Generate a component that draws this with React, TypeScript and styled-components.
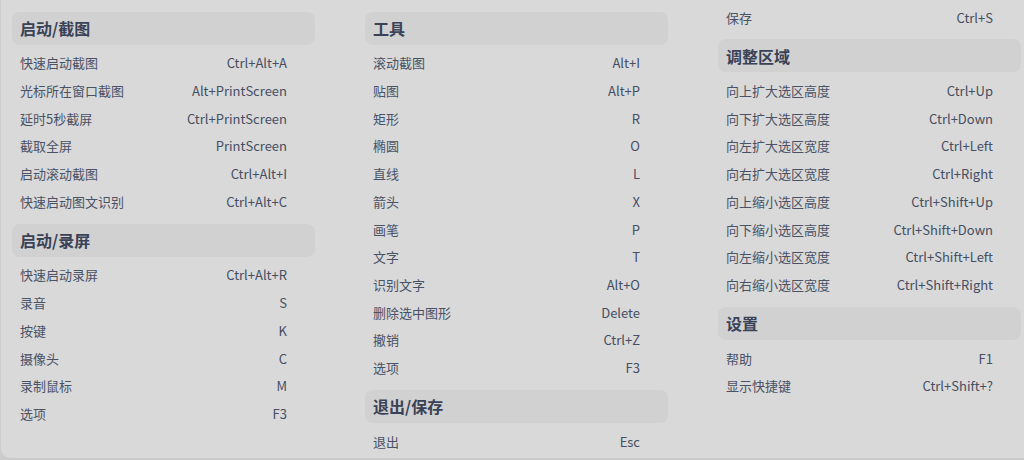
import React from "react";
import styled, { createGlobalStyle } from "styled-components";

const GlobalStyle = createGlobalStyle`
  html, body {
    margin: 0;
    padding: 0;
    background: #cbcbcb;
    width: 1024px;
    height: 460px;
    overflow: hidden;
  }
  * { box-sizing: border-box; }
`;

type Item = { label: string; keys: string };
type Block =
  | { kind: "header"; title: string }
  | { kind: "row"; item: Item };

const h = (title: string): Block => ({ kind: "header", title });
const r = (label: string, keys: string): Block => ({ kind: "row", item: { label, keys } });

const columns: Block[][] = [
  [
    h("启动/截图"),
    r("快速启动截图", "Ctrl+Alt+A"),
    r("光标所在窗口截图", "Alt+PrintScreen"),
    r("延时5秒截屏", "Ctrl+PrintScreen"),
    r("截取全屏", "PrintScreen"),
    r("启动滚动截图", "Ctrl+Alt+I"),
    r("快速启动图文识别", "Ctrl+Alt+C"),
    h("启动/录屏"),
    r("快速启动录屏", "Ctrl+Alt+R"),
    r("录音", "S"),
    r("按键", "K"),
    r("摄像头", "C"),
    r("录制鼠标", "M"),
    r("选项", "F3"),
  ],
  [
    h("工具"),
    r("滚动截图", "Alt+I"),
    r("贴图", "Alt+P"),
    r("矩形", "R"),
    r("椭圆", "O"),
    r("直线", "L"),
    r("箭头", "X"),
    r("画笔", "P"),
    r("文字", "T"),
    r("识别文字", "Alt+O"),
    r("删除选中图形", "Delete"),
    r("撤销", "Ctrl+Z"),
    r("选项", "F3"),
    h("退出/保存"),
    r("退出", "Esc"),
  ],
  [
    r("保存", "Ctrl+S"),
    h("调整区域"),
    r("向上扩大选区高度", "Ctrl+Up"),
    r("向下扩大选区高度", "Ctrl+Down"),
    r("向左扩大选区宽度", "Ctrl+Left"),
    r("向右扩大选区宽度", "Ctrl+Right"),
    r("向上缩小选区高度", "Ctrl+Shift+Up"),
    r("向下缩小选区高度", "Ctrl+Shift+Down"),
    r("向左缩小选区宽度", "Ctrl+Shift+Left"),
    r("向右缩小选区宽度", "Ctrl+Shift+Right"),
    h("设置"),
    r("帮助", "F1"),
    r("显示快捷键", "Ctrl+Shift+?"),
  ],
];

const Panel = styled.div`
  width: 1024px;
  height: 458px;
  background: #d9d9d9;
  border-left: 1px solid #cdcdcd;
  border-bottom-left-radius: 10px;
  padding: 3.2px 3px 0 11px;
  display: grid;
  grid-template-columns: repeat(3, 303px);
  column-gap: 50px;
  align-items: start;
  font-family: "Noto Sans CJK SC", "Noto Sans", sans-serif;
`;

const Column = styled.div`
  display: flex;
  flex-direction: column;
`;

const SectionHeader = styled.div`
  height: 33px;
  margin-top: 8.6px;
  margin-bottom: 4.3px;
  border-radius: 8px;
  background: #d1d1d2;
  display: flex;
  align-items: center;
  padding-left: 8px;
  font-size: 16px;
  font-weight: 700;
  color: #3a4257;
  letter-spacing: 0;
`;

const Row = styled.div`
  height: 27.7px;
  display: flex;
  align-items: center;
  justify-content: space-between;
  padding: 0 28px 0 8px;
  font-size: 13px;
  color: #4a5266;
`;

const Label = styled.span`
  white-space: nowrap;
`;

const Keys = styled.span`
  white-space: nowrap;
  color: #454e62;
`;

export default function App() {
  return (
    <>
      <GlobalStyle />
      <Panel>
        {columns.map((col, ci) => (
          <Column key={ci}>
            {col.map((b, bi) =>
              b.kind === "header" ? (
                <SectionHeader key={bi}>{b.title}</SectionHeader>
              ) : (
                <Row key={bi}>
                  <Label>{b.item.label}</Label>
                  <Keys>{b.item.keys}</Keys>
                </Row>
              )
            )}
          </Column>
        ))}
      </Panel>
    </>
  );
}
